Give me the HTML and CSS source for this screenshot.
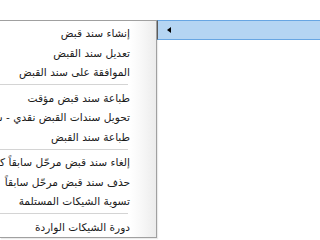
FILE: index.html
```html
<!DOCTYPE html>
<html lang="ar">
<head>
  <meta charset="UTF-8">
  <title>سند القبض</title>
  <link rel="stylesheet" href="styles.css">
</head>
<body>
  <div class="menu-row">
    <!-- Submenu (opens to the left) -->
    <ul class="submenu" dir="rtl">
      <li class="item">إنشاء سند قبض</li>
      <li class="item">تعديل سند القبض</li>
      <li class="item">الموافقة على سند القبض</li>
      <li class="sep"></li>
      <li class="item">طباعة سند قبض مؤقت</li>
      <li class="item">تحويل سندات القبض نقدي - شيكات</li>
      <li class="item">طباعة سند القبض</li>
      <li class="sep"></li>
      <li class="item">إلغاء سند قبض مرحّل سابقاً كاملاً</li>
      <li class="item">حذف سند قبض مرحّل سابقاً</li>
      <li class="item">تسوية الشيكات المستلمة</li>
      <li class="sep"></li>
      <li class="item">دورة الشيكات الواردة</li>
    </ul>

    <!-- Highlighted parent item -->
    <div class="parent-item">
      <span class="arrow"></span>
    </div>
  </div>
</body>
</html>
```

FILE: styles.css
```css
/* Reset */
* {
  margin: 0;
  padding: 0;
  box-sizing: border-box;
}

body {
  width: 320px;
  height: 240px;
  background: #fff;
  font-family: Tahoma, "DejaVu Sans", sans-serif;
  font-size: 10.6px;
  color: #1b1b1b;
  overflow: hidden;
}

/* Row holding submenu + parent item */
.menu-row {
  display: flex;
  align-items: flex-start;
  padding-top: 20px;
}

/* Submenu */
.submenu {
  list-style: none;
  width: 157px;
  flex-shrink: 0;
  padding: 2px 0 1px;
  border: 1px solid #a0a0a0;
  border-left: none;
  background: linear-gradient(to right, #fff 0, #fff 130px, #f7f7f7 142px, #ececec 156px);
  box-shadow: 1px 1px 1px rgba(0, 0, 0, 0.08);
}

.item {
  height: 19.5px;
  line-height: 21px;
  padding-right: 26px;
  white-space: nowrap;
  text-align: right;
}

.sep {
  height: 6px;
  margin-right: 28px;
  padding-top: 2.5px;
}

.sep::after {
  content: "";
  display: block;
  height: 1px;
  background: #d4d4d4;
}

/* Parent item highlighted */
.parent-item {
  flex: 1;
  height: 20px;
  display: flex;
  align-items: center;
  background: #b5d5f3;
  border-top: 1px solid #68a6e3;
  border-bottom: 1px solid #68a6e3;
  border-left: 1px solid #5b5b5b;
  padding-left: 9px;
}

.arrow {
  width: 0;
  height: 0;
  border-top: 3.5px solid transparent;
  border-bottom: 3.5px solid transparent;
  border-right: 4px solid #000;
}
```
